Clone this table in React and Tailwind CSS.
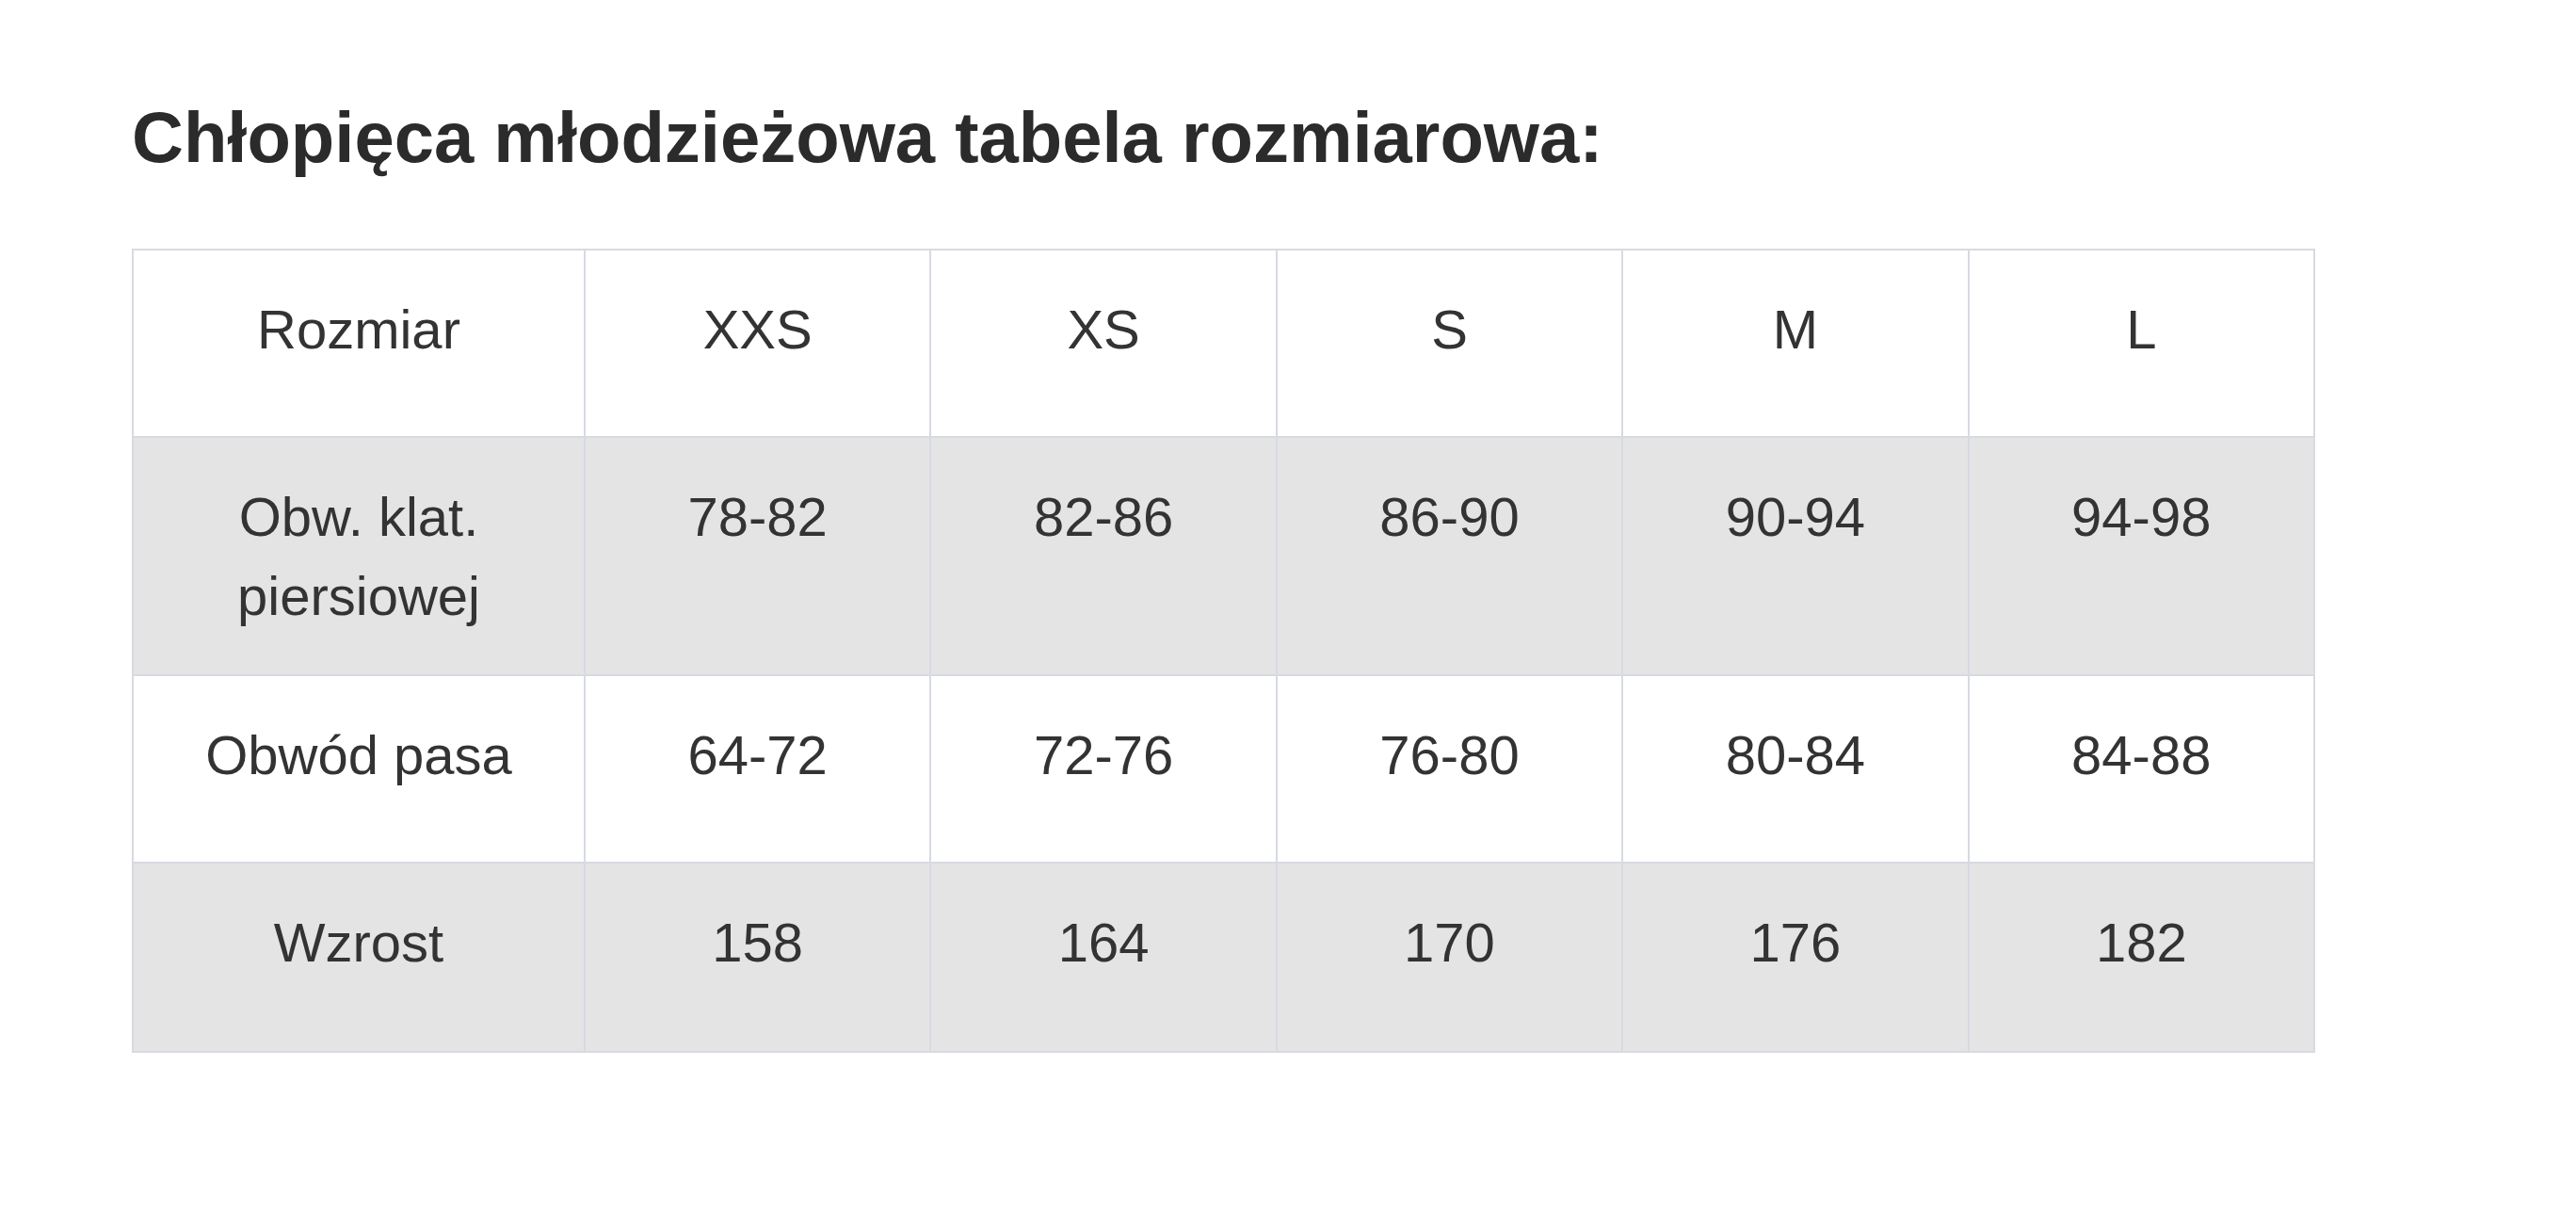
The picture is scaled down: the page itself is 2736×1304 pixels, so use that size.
import React from 'react';

const sizes = ['XXS', 'XS', 'S', 'M', 'L'];

const rows = [
  { label: ['Obw. klat.', 'piersiowej'], values: ['78-82', '82-86', '86-90', '90-94', '94-98'], gray: true, h: 'h-[253px]' },
  { label: ['Obwód pasa'], values: ['64-72', '72-76', '76-80', '80-84', '84-88'], gray: false, h: 'h-[199px]' },
  { label: ['Wzrost'], values: ['158', '164', '170', '176', '182'], gray: true, h: 'h-[201px]' },
];

const cell = 'border-2 border-[#d8dae2] align-top text-center pt-[42px] px-4';

const App = () => {
  return (
    <div className="min-h-screen w-full bg-white font-['Liberation_Sans',Arial,sans-serif] text-[#333333]">
      <div className="pl-[140px] pt-[104px]">
        <h2 className="text-[76px] font-bold leading-[1.1] text-[#2b2b2b]">
          Chłopięca młodzieżowa tabela rozmiarowa:
        </h2>

        <table className="mt-[76px] w-[2319px] table-fixed border-collapse text-[58px] leading-[84px]">
          <colgroup>
            <col className="w-[480px]" />
            <col />
            <col />
            <col />
            <col />
            <col />
          </colgroup>
          <tbody>
            <tr className="h-[199px] bg-white">
              <td className={cell}>Rozmiar</td>
              {sizes.map((s) => (
                <td key={s} className={cell}>{s}</td>
              ))}
            </tr>
            {rows.map((row) => (
              <tr key={row.label[0]} className={`${row.h} ${row.gray ? 'bg-[#e4e4e4]' : 'bg-white'}`}>
                <td className={cell}>
                  {row.label.map((l) => (
                    <div key={l}>{l}</div>
                  ))}
                </td>
                {row.values.map((v, i) => (
                  <td key={i} className={cell}>{v}</td>
                ))}
              </tr>
            ))}
          </tbody>
        </table>
      </div>
    </div>
  );
};

export default App;
